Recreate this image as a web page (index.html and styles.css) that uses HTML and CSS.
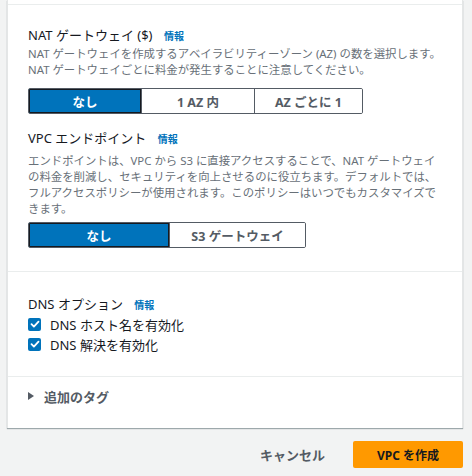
FILE: index.html
```html
<!DOCTYPE html>
<html lang="ja">
	<head>
		<meta charset="UTF-8">
		<title>VPC を作成</title>
		<link rel="stylesheet" href="styles.css">
	</head>
	<body>
		<div class="page">
			<div class="card">
				<div class="section section-top"></div>
				<div class="section section-options">
					<div class="field">
						<div class="label">NAT ゲートウェイ ($) <a class="info" href="#">情報</a></div>
						<p class="desc">NAT ゲートウェイを作成するアベイラビリティーゾーン (AZ) の数を選択します。<br>NAT ゲートウェイごとに料金が発生することに注意してください。</p>
						<div class="segments segments-3">
							<button class="seg active">なし</button>
							<button class="seg">1 AZ 内</button>
							<button class="seg">AZ ごとに 1</button>
						</div>
					</div>
					<div class="field field-vpc">
						<div class="label">VPC エンドポイント <a class="info" href="#">情報</a></div>
						<p class="desc">エンドポイントは、VPC から S3 に直接アクセスすることで、NAT ゲートウェイ<br>の料金を削減し、セキュリティを向上させるのに役立ちます。デフォルトでは、<br>フルアクセスポリシーが使用されます。このポリシーはいつでもカスタマイズで<br>きます。</p>
						<div class="segments segments-2">
							<button class="seg active">なし</button>
							<button class="seg">S3 ゲートウェイ</button>
						</div>
					</div>
				</div>
				<div class="section section-dns">
					<div class="label">DNS オプション <a class="info" href="#">情報</a></div>
					<label class="check"><span class="box"><svg viewBox="0 0 12 12" width="12" height="12"><path d="M2.5 6.2l2.4 2.4 4.6-5" fill="none" stroke="#fff" stroke-width="1.8" stroke-linecap="round" stroke-linejoin="round"/></svg></span>DNS ホスト名を有効化</label>
					<label class="check"><span class="box"><svg viewBox="0 0 12 12" width="12" height="12"><path d="M2.5 6.2l2.4 2.4 4.6-5" fill="none" stroke="#fff" stroke-width="1.8" stroke-linecap="round" stroke-linejoin="round"/></svg></span>DNS 解決を有効化</label>
				</div>
				<div class="section section-tags">
					<div class="expander"><span class="caret"></span>追加のタグ</div>
				</div>
			</div>
			<div class="footer">
				<button class="btn-link">キャンセル</button>
				<button class="btn-primary">VPC を作成</button>
			</div>
		</div>
	</body>
</html>
```

FILE: styles.css
```css
* {
	padding: 0;
	margin: 0;
	box-sizing: border-box;
}
body {
	background: #f2f3f3;
	font-family: "Noto Sans", "Noto Sans CJK JP", sans-serif;
	color: #16191f;
	height: 476px;
	overflow: hidden;
}
.page {
	padding: 0 9px 0 7px;
}
.card {
	background: #fff;
	border-left: 1px solid #e4e6e6;
	border-right: 1px solid #e4e6e6;
	box-shadow: 0 1px 1px 0 rgba(0, 28, 36, 0.35);
}
.section {
	border-bottom: 1px solid #eaeded;
	padding: 0 20px;
}
.section-top {
	height: 5px;
}
.section-options {
	padding-top: 21px;
	padding-bottom: 23px;
}
.field + .field {
	margin-top: 15px;
}
.label {
	font-size: 13px;
	line-height: 18px;
	color: #16191f;
}
.info {
	font-size: 10px;
	font-weight: bold;
	color: #0073bb;
	text-decoration: none;
	margin-left: 8px;
}
.desc {
	font-size: 11.4px;
	line-height: 16px;
	color: #687078;
	margin-top: 1px;
	white-space: nowrap;
}
.field-vpc .desc {
	margin-top: 5px;
}
.segments {
	display: grid;
	margin-top: 10px;
	border: 1px solid #545b64;
	border-radius: 2px;
	overflow: hidden;
}
.segments-3 {
	width: 335px;
	grid-template-columns: 112px 113px 1fr;
}
.segments-2 {
	width: 278px;
	grid-template-columns: 140px 1fr;
	margin-top: 5px;
}
.seg {
	height: 24px;
	border: none;
	border-left: 1px solid #545b64;
	background: #fff;
	font-family: inherit;
	font-size: 12.5px;
	font-weight: bold;
	color: #545b64;
}
.seg:first-child {
	border-left: none;
}
.seg.active {
	background: #0073bb;
	color: #fff;
	box-shadow: inset 0 0 0 1px #16191f;
}
.section-dns {
	padding-top: 23px;
	padding-bottom: 22px;
}
.check {
	display: flex;
	align-items: center;
	gap: 9px;
	height: 20px;
	font-size: 13px;
	color: #16191f;
}
.box {
	width: 13px;
	height: 13px;
	border-radius: 2px;
	background: #0073bb;
	display: flex;
	align-items: center;
	justify-content: center;
}
.section-tags {
	border-bottom: none;
	padding-top: 10px;
	padding-bottom: 23px;
}
.expander {
	display: flex;
	align-items: center;
	gap: 10px;
	height: 18px;
	font-size: 13px;
	font-weight: bold;
	color: #545b64;
}
.caret {
	width: 0;
	height: 0;
	border-top: 4px solid transparent;
	border-bottom: 4px solid transparent;
	border-left: 6px solid #545b64;
}
.footer {
	display: flex;
	justify-content: flex-end;
	align-items: center;
	gap: 28px;
	margin-top: 13px;
}
.btn-link {
	background: none;
	border: none;
	font-family: inherit;
	font-size: 13px;
	font-weight: bold;
	color: #545b64;
}
.btn-primary {
	width: 110px;
	height: 27px;
	background: #ff9900;
	border: none;
	border-radius: 2px;
	font-family: inherit;
	font-size: 12px;
	font-weight: bold;
	color: #16191f;
}
```
